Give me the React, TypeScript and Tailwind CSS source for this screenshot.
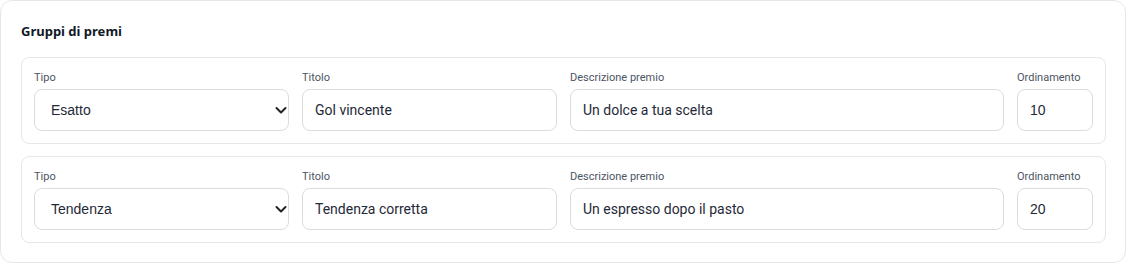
import React from 'react';

const rows = [
  { tipo: 'Esatto', titolo: 'Gol vincente', descrizione: 'Un dolce a tua scelta', ordine: '10' },
  { tipo: 'Tendenza', titolo: 'Tendenza corretta', descrizione: 'Un espresso dopo il pasto', ordine: '20' },
];

const fieldClass =
  'h-[42px] w-full rounded-lg border border-[#d9dce1] bg-white text-[14px] text-[#1f2937] outline-none';

function Label({ children }: { children: React.ReactNode }) {
  return <div className="text-[11px] leading-[14px] text-[#4b5563] mb-[4px]">{children}</div>;
}

export default function App() {
  return (
    <div className="bg-white" style={{ fontFamily: 'Roboto, "Noto Sans", sans-serif' }}>
      <div className="w-[1126px] h-[263px] rounded-xl border border-[#e5e7eb] bg-white pl-[20px] pr-[19px] pt-[20px]">
        <h3
          className="text-[13px] leading-[20px] font-bold text-[#111827]"
          style={{ fontFamily: '"Noto Sans", sans-serif' }}
        >
          Gruppi di premi
        </h3>
        <div className="mt-[16px] flex flex-col gap-[12px]">
          {rows.map((r, i) => (
            <div
              key={i}
              className="rounded-lg border border-[#e5e7eb] px-[12px] pt-[13px] pb-[12px] grid grid-cols-[255px_255px_1fr_76px] gap-x-[13px]"
            >
              <div>
                <Label>Tipo</Label>
                <div className="relative">
                  <select
                    defaultValue={r.tipo}
                    className={fieldClass + ' appearance-none pl-[16px] pr-8'}
                    style={{ fontFamily: '"Liberation Sans", Arial, sans-serif' }}
                  >
                    <option>Esatto</option>
                    <option>Tendenza</option>
                  </select>
                  <svg
                    className="pointer-events-none absolute right-[2px] top-1/2 -translate-y-1/2"
                    width="12"
                    height="12"
                    viewBox="0 0 12 12"
                  >
                    <path d="M1.5 4 L6 8.5 L10.5 4" fill="none" stroke="#222" strokeWidth="2" strokeLinecap="round" strokeLinejoin="round" />
                  </svg>
                </div>
              </div>
              <div>
                <Label>Titolo</Label>
                <input defaultValue={r.titolo} className={fieldClass + ' px-[12px]'} />
              </div>
              <div>
                <Label>Descrizione premio</Label>
                <input defaultValue={r.descrizione} className={fieldClass + ' px-[12px]'} />
              </div>
              <div>
                <Label>Ordinamento</Label>
                <input
                  defaultValue={r.ordine}
                  className={fieldClass + ' px-[12px]'}
                  style={{ fontFamily: '"Liberation Sans", Arial, sans-serif' }}
                />
              </div>
            </div>
          ))}
        </div>
      </div>
    </div>
  );
}
